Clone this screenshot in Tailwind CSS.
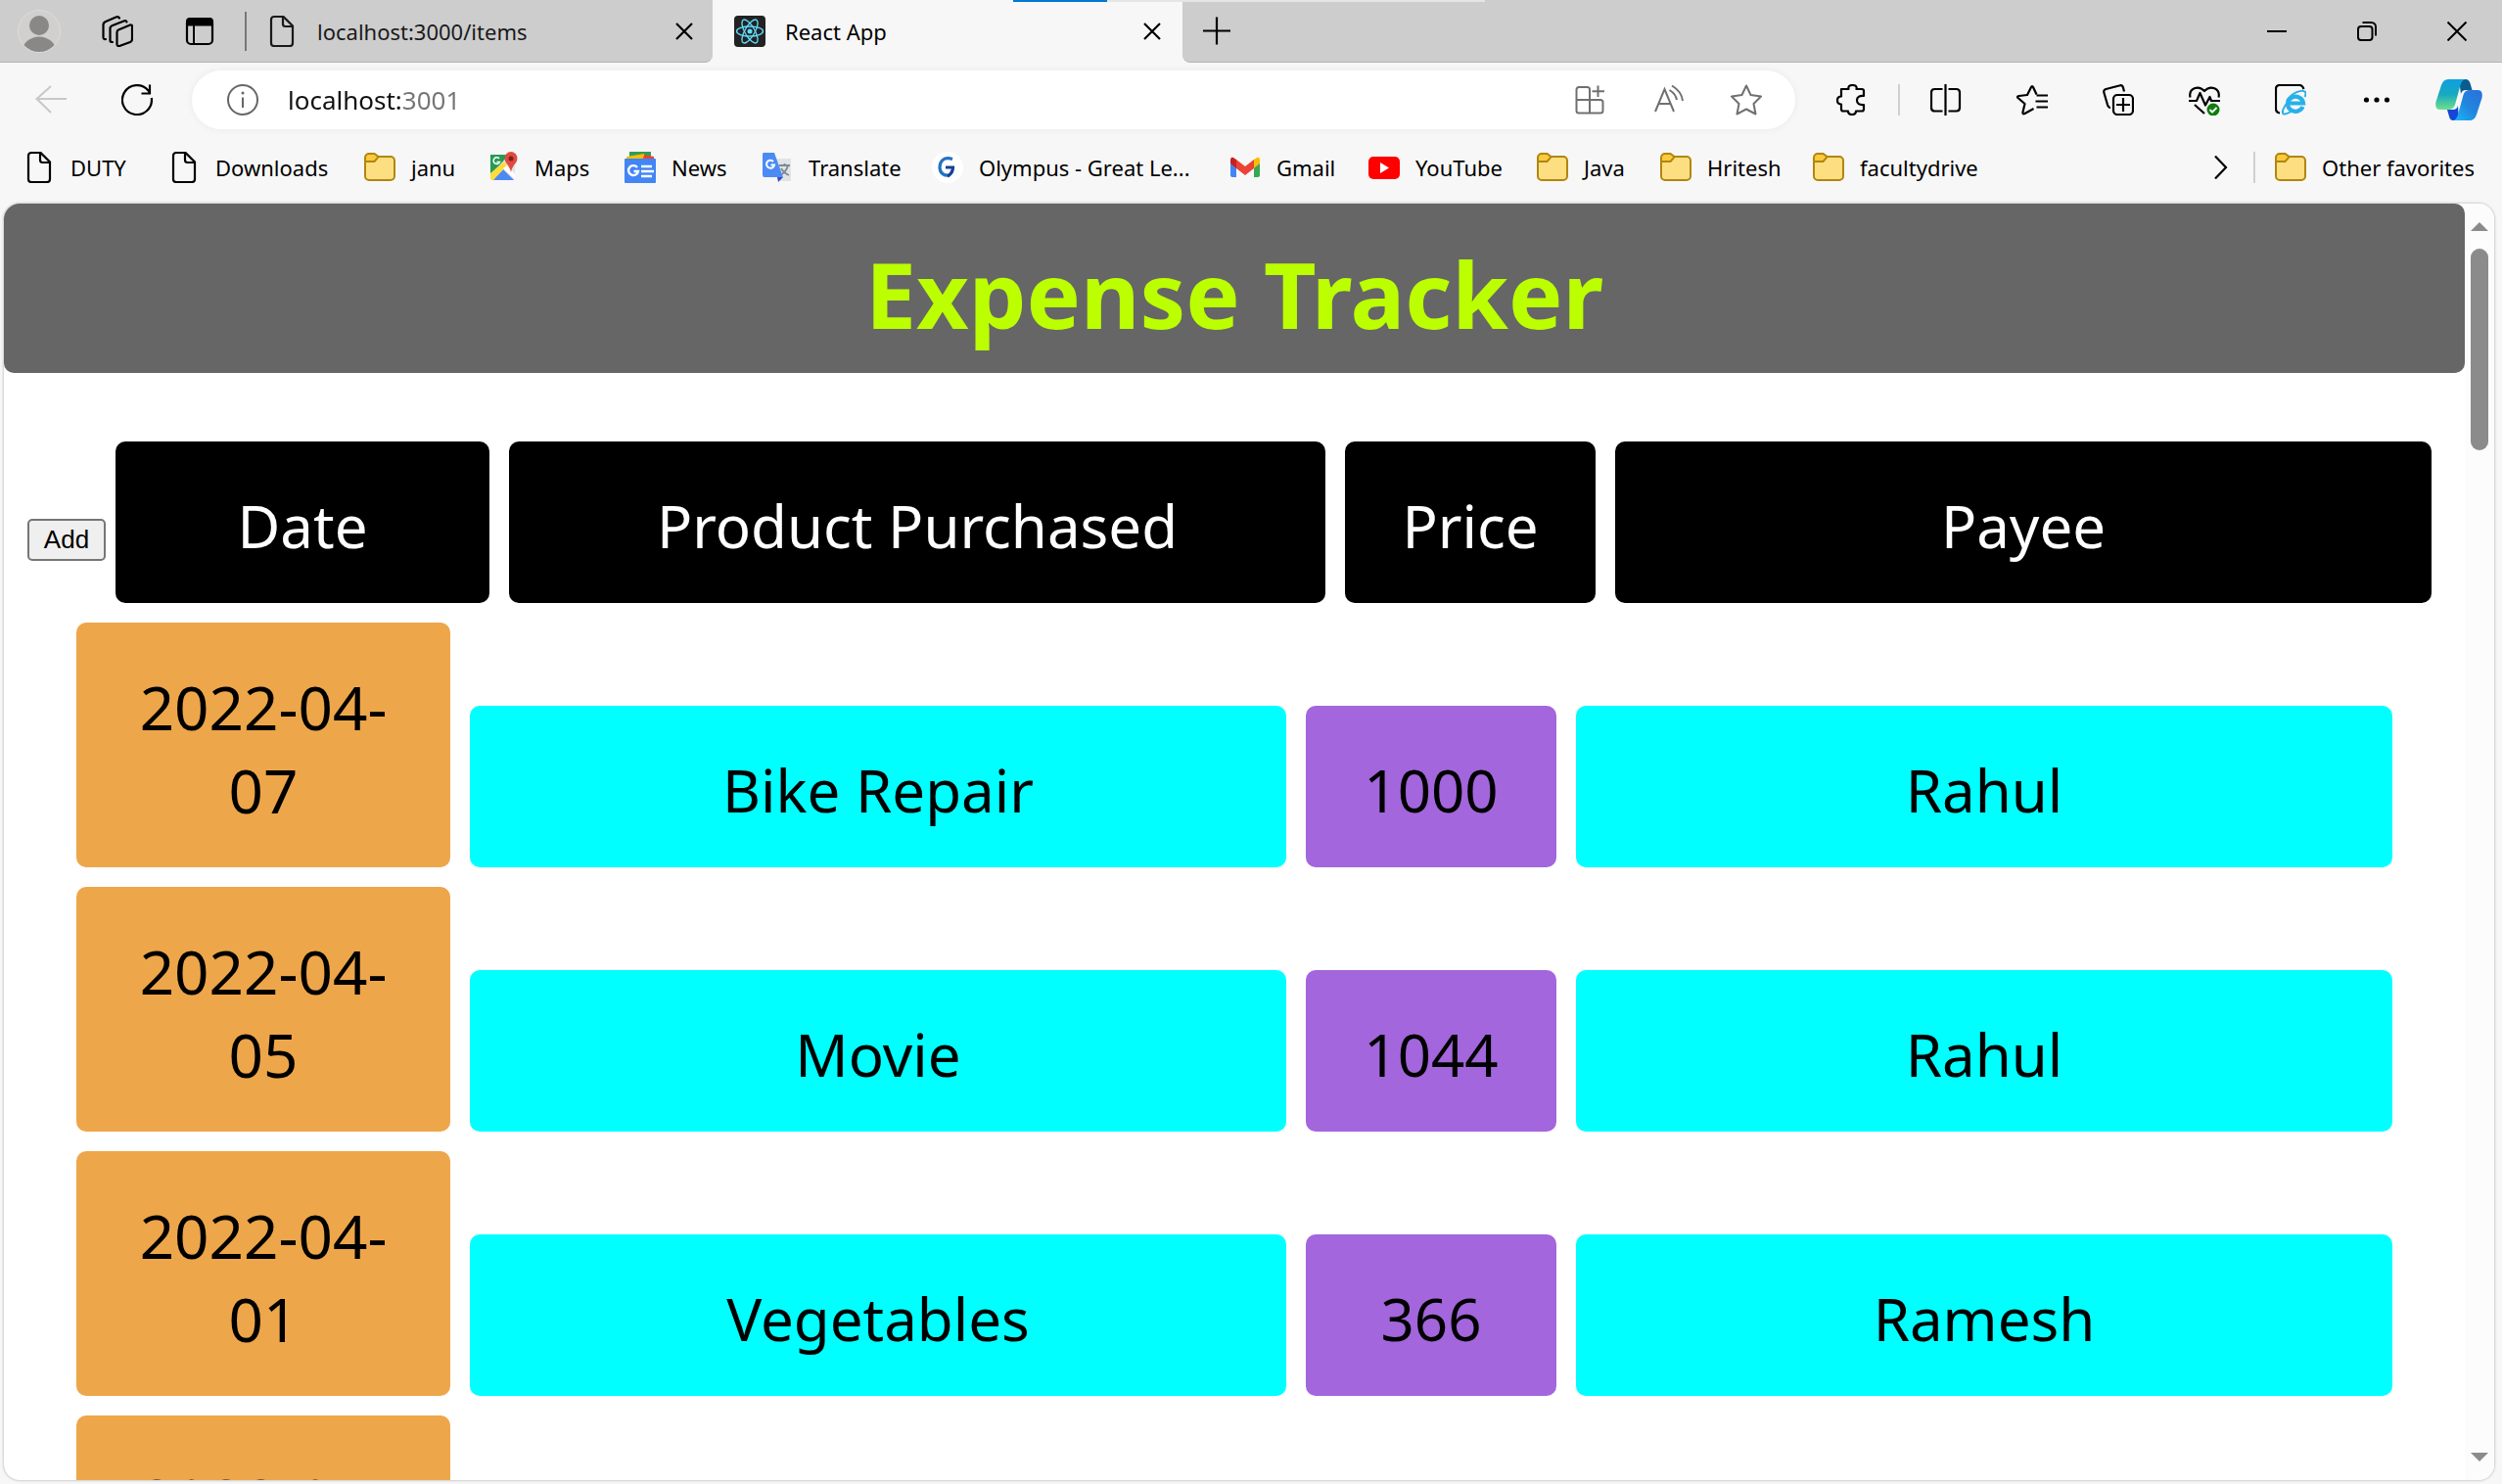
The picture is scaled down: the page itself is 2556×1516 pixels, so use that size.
<!DOCTYPE html>
<html lang="en">
<head>
<meta charset="utf-8">
<title>React App</title>
<script src="https://cdn.jsdelivr.net/npm/@tailwindcss/browser@4"></script>
</head>
<body class="flex h-screen flex-col overflow-hidden bg-[#f7f7f7] font-['Noto_Sans',sans-serif] text-[22px] leading-[30px] text-black">

<svg class="hidden" aria-hidden="true">
  <symbol id="file" viewBox="0 0 32 32"><path d="M7.500 1H17.500L27 10.500V28A3 3 0 0 1 24 31H8A3 3 0 0 1 5 28V4A3 3 0 0 1 8 1M17 1V8.500A2.500 2.500 0 0 0 19.500 11H27" fill="none" stroke="currentColor" stroke-width="2.200"/></symbol>
  <symbol id="folder" viewBox="0 0 32 32"><path d="M1 6A4 4 0 0 1 5 2H10.500L14.500 5H27A4 4 0 0 1 31 9V25A4 4 0 0 1 27 29H5A4 4 0 0 1 1 25Z" fill="#fddf82"/><path d="M1 10V6A4 4 0 0 1 5 2H10.500L14.500 5.500 10.500 10Z" fill="#fcca3d"/><path d="M1 10H10.500L14.500 5.300M1 6A4 4 0 0 1 5 2H10.500L14.500 5H27A4 4 0 0 1 31 9V25A4 4 0 0 1 27 29H5A4 4 0 0 1 1 25Z" fill="none" stroke="#b1860f" stroke-width="2"/></symbol>
  <symbol id="x" viewBox="0 0 20 20"><path d="M2 2 18 18M18 2 2 18" fill="none" stroke="currentColor" stroke-width="2.200"/></symbol>
</svg>

<!-- Tab strip -->
<header class="relative flex h-16 shrink-0">
  <div class="flex w-[728px] items-center rounded-br-lg border-b border-[#b4b4b4] bg-[#cdcdcd] pl-[18px]">
    <button aria-label="Profile" class="size-11">
      <svg viewBox="0 0 44 44"><defs><clipPath id="av"><circle cx="22" cy="22" r="21"/></clipPath></defs><circle cx="22" cy="22" r="21.500" fill="#d2d0ce" stroke="#dddcda"/><g clip-path="url(#av)" fill="#8a8886"><circle cx="22" cy="16" r="10"/><ellipse cx="22" cy="43" rx="17.500" ry="15.500"/></g></svg>
    </button>
    <button aria-label="Workspaces" class="ml-[42px] size-8">
      <svg viewBox="0 0 32 32" fill="none" stroke="currentColor" stroke-width="2.200" stroke-linejoin="round" stroke-linecap="round"><path d="M17 14.500 29 9.500Q31 9 31 11V24Q31 26 29 27L18 31Q15.500 31.500 15.500 29V17Q15.500 15 17 14.500Z"/><path d="M25.500 6.500Q25 4.500 22.500 5.500L11 10Q8.500 11 8.500 13V25.500Q8.500 27 11 27"/><path d="M18 2.500Q17 .500 14.500 1.500L4 6Q1.500 7 1.500 9.500V22Q1.500 24.500 4 24"/></svg>
    </button>
    <button aria-label="Tab actions" class="ml-[52px] size-8">
      <svg viewBox="0 0 32 32"><rect x="3" y="3" width="26" height="26" rx="4" fill="none" stroke="#000" stroke-width="2.200"/><path d="M2 10.500V6a4 4 0 0 1 4-4H26a4 4 0 0 1 4 4V10.500Z"/><path d="M10 10V29" stroke="#000" stroke-width="2"/></svg>
    </button>
    <div class="ml-[30px] h-10 w-0.5 bg-[#777]"></div>
    <a href="#" class="ml-[20px] flex flex-1 items-center text-[#1a1a1a]">
      <svg class="size-8"><use href="#file"/></svg><span class="ml-5">localhost:3000/items</span>
    </a>
    <button aria-label="Close tab" class="mr-[19px] size-5"><svg class="size-5"><use href="#x"/></svg></button>
  </div>
  <div class="flex w-[480px] items-center pl-[22px]">
    <svg class="size-8" viewBox="0 0 32 32"><rect width="32" height="32" rx="4" fill="#222"/><g fill="none" stroke="#61dafb" stroke-width="1.400"><ellipse cx="16" cy="16" rx="13.500" ry="5"/><ellipse cx="16" cy="16" rx="13.500" ry="5" transform="rotate(60 16 16)"/><ellipse cx="16" cy="16" rx="13.500" ry="5" transform="rotate(120 16 16)"/></g><circle cx="16" cy="16" r="2.500" fill="#61dafb"/></svg>
    <a href="#" class="ml-[20px] flex-1">React App</a>
    <button aria-label="Close tab" class="mr-[21px] size-5"><svg class="size-5"><use href="#x"/></svg></button>
  </div>
  <div class="flex flex-1 items-center rounded-bl-lg border-b border-[#b4b4b4] bg-[#cdcdcd] pl-[19px]">
    <button aria-label="New tab" class="size-8"><svg viewBox="0 0 32 32"><path d="M16 1.500V29.500M2 15.500H30" stroke="#000" stroke-width="2.200"/></svg></button>
    <div class="ml-auto flex items-center gap-[72px] pr-9">
      <button aria-label="Minimize" class="size-5"><svg viewBox="0 0 20 20"><path d="M0 10H20" stroke="#000" stroke-width="2"/></svg></button>
      <button aria-label="Restore" class="size-5"><svg viewBox="0 0 20 20" fill="none" stroke="#000" stroke-width="2"><rect x="1" y="5" width="14.500" height="14" rx="3"/><path d="M5.500 1H14.500A4.500 4.500 0 0 1 19 5.500V14.500"/></svg></button>
      <button aria-label="Close window" class="size-5"><svg viewBox="0 0 20 20"><path d="M.500.500 19.500 19.500M19.500.500.500 19.500" stroke="#000" stroke-width="2"/></svg></button>
    </div>
  </div>
  <div class="absolute top-0 left-[1035px] flex h-0.5 w-[482px] bg-[#e5e5e5]"><div class="w-24 bg-[#0078d4]"></div></div>
</header>

<!-- Address toolbar -->
<div class="flex h-[76px] shrink-0 items-center pr-5 pl-9">
  <button aria-label="Back" disabled class="size-8"><svg viewBox="0 0 32 32" fill="none" stroke="#c8c8c8" stroke-width="2"><path d="M16 2 1.500 15 16 29M1.500 15H32"/></svg></button>
  <button aria-label="Refresh" class="ml-14 size-8"><svg viewBox="0 0 32 32" fill="none" stroke="#000" stroke-width="2.200"><path d="M30.800 14A15 15 0 1 1 27.500 6.500L29 9M29 .500V9.500H20.500"/></svg></button>
  <div class="ml-10 flex h-[60px] min-w-0 flex-1 items-center rounded-full bg-white pr-[34px] pl-9 shadow-[0_0_8px_rgba(0,0,0,0.06)]">
    <svg class="size-8 shrink-0" viewBox="0 0 32 32" fill="none" stroke="#666" stroke-width="2"><circle cx="16" cy="16" r="15"/><path d="M16 13.500V24"/><circle cx="16" cy="9" r="1.500" fill="#666" stroke="none"/></svg>
    <input aria-label="Address" value="localhost:3001" class="ml-[30px] h-10 min-w-0 flex-1 bg-[linear-gradient(90deg,#111111_115px,#757575_115px)] bg-clip-text text-[26px] leading-9 text-transparent outline-none">
    <div class="flex gap-12 text-[#707070]">
      <button aria-label="Install app" class="size-8"><svg viewBox="0 0 32 32" fill="none" stroke="currentColor" stroke-width="2"><path d="M16 16V5A2.500 2.500 0 0 0 13.500 3H5A2.500 2.500 0 0 0 2.500 5.500V27A2.500 2.500 0 0 0 5 29.500H27A2.500 2.500 0 0 0 29.500 27V18.500A2.500 2.500 0 0 0 27 16H2.500M16 16V29.500M24.500 1.500V13M18.500 7.200H31"/></svg></button>
      <button aria-label="Read aloud" class="size-8"><svg viewBox="0 0 32 32" fill="none" stroke="currentColor" stroke-width="2"><path d="M3 28 12.500 5 22 28M6 20H19M17.500 6Q24 10 25 16M20 1.500Q30 7.500 31 17"/></svg></button>
      <button aria-label="Favorite this page" class="size-8"><svg viewBox="0 0 32 32" fill="none" stroke="currentColor" stroke-width="2" stroke-linejoin="round"><path d="M16 1.500 20.500 11 31 12.500 23.500 20 25.500 30.500 16 25.500 6.500 30.500 8.500 20 1 12.500 11.500 11Z"/></svg></button>
    </div>
  </div>
  <button aria-label="Extensions" class="ml-[42px] size-8"><svg viewBox="0 0 32 32" fill="none" stroke="#000" stroke-width="2.200" stroke-linejoin="round"><path d="M5 5H12.500Q11.500 1 16.500 1T20.500 5H26Q28 5 28 7V12Q21 11.500 21 16.500T28 21V25.500Q28 27.500 26 27.500H20Q20 31 16 31T12 27.500H7Q5 27.500 5 25.500V20.500Q1 20.500 1 16.500T5 12.500Z"/></svg></button>
  <div class="mx-[31px] h-8 w-0.5 bg-[#d0d0d0]"></div>
  <div class="flex items-center gap-14">
    <button aria-label="Split screen" class="size-8"><svg viewBox="0 0 32 32" fill="none" stroke="#000" stroke-width="2.200"><path d="M12.500 5H4.500Q1 5 1 8.500V24Q1 27.500 4.500 27.500H12.500M18.500 5H26.500Q30 5 30 8.500V24Q30 27.500 26.500 27.500H18.500M15.500 0V32"/></svg></button>
    <button aria-label="Favorites" class="size-8"><svg viewBox="0 0 32 32" fill="none" stroke="#000" stroke-width="2.200" stroke-linejoin="round"><path d="M17.500 25 8.500 30Q6 31 6.500 28.500L8.500 20 1.500 14Q0 12.500 2.500 12L11 11 15 3Q16 1 17 3L20.500 10.500M20.500 11.500H32M19.500 17.500H32M20.500 23.500H32"/></svg></button>
    <button aria-label="Collections" class="size-8"><svg viewBox="0 0 32 32" fill="none" stroke="#000" stroke-width="2.200"><rect x="11" y="11" width="20" height="20" rx="4"/><path d="M21 14V28M14 21H28M8 24Q6 24 5 21L1.500 9Q.500 6 3.500 5L17 1.500Q20 .500 21 3.500L22 7.500"/></svg></button>
    <button aria-label="Browser essentials" class="size-8"><svg viewBox="0 0 32 32" fill="none" stroke="#000" stroke-width="2.200" stroke-linejoin="round"><path d="M1.500 13.500C-.500 4 10 .500 16 7 22 .500 32.500 4 30.500 13.500M0 17H8L11.500 9 17 21.500 21.500 13 23 17H32M6 21 16 30"/><circle cx="25" cy="26" r="6.500" fill="#107c10" stroke="none"/><path d="M21.500 26 24 28.500 28.500 24" stroke="#fff" stroke-width="1.800"/></svg></button>
    <button aria-label="Internet Explorer mode" class="size-8"><svg viewBox="0 0 32 32" fill="none"><path d="M5 29.500Q1 29 1 25V5Q1 1 5 1H25Q28 1 29.500 5" stroke="#000" stroke-width="2.200"/><path d="M28.500 23A8 7.500 0 1 1 29 19.500H14" stroke="#28b1e9" stroke-width="4.200"/><path d="M12 17C17 9 28 4.500 31 8 32 9.500 31 12 30.500 13M12.500 19C7 26 6.500 31.500 10.500 30.500 13 30 15 29 17 27.500" stroke="#28b1e9" stroke-width="2"/></svg></button>
    <button aria-label="Settings and more" class="size-8"><svg viewBox="0 0 32 32"><circle cx="5.500" cy="16" r="2.600"/><circle cx="16" cy="16" r="2.600"/><circle cx="26.500" cy="16" r="2.600"/></svg></button>
  </div>
  <button aria-label="Copilot" class="ml-11 size-12"><svg viewBox="0 0 48 48"><defs>
    <linearGradient id="cpa" x1="0" y1="0" x2="0" y2="1"><stop offset="0" stop-color="#0f9fe0"/><stop offset=".5" stop-color="#18a9c0"/><stop offset="1" stop-color="#6ee08a"/></linearGradient>
    <linearGradient id="cpb" x1="1" y1="0" x2="0" y2="1"><stop offset="0" stop-color="#2a6fe0"/><stop offset=".5" stop-color="#2185dc"/><stop offset="1" stop-color="#18b9fb"/></linearGradient></defs>
    <path d="M24 3H31Q34 3 35.500 7L37.500 14H31Q27 14 26 18Z" fill="#0b5c8e"/>
    <path d="M24 45H18Q15 45 14 41L12 34H18Q22 34 23 30Z" fill="#1546d6"/>
    <path d="M13 3H31Q27 3.500 25.500 9L20 29Q18.500 34 13 34H5Q-1 34 .500 26L6 9Q8 3 13 3Z" fill="url(#cpa)"/>
    <path d="M35 45H18Q21.500 44.500 23 39L28.500 19Q30 14 35 14H43Q49 14 47.500 22L42 39Q40 45 35 45Z" fill="url(#cpb)"/>
  </svg></button>
</div>

<!-- Favorites bar -->
<nav class="flex h-[62px] shrink-0 items-center pr-7 pl-6 whitespace-nowrap">
  <a href="#" class="flex w-[148px] items-center gap-4"><svg class="size-8"><use href="#file"/></svg>DUTY</a>
  <a href="#" class="flex w-[200px] items-center gap-4"><svg class="size-8"><use href="#file"/></svg>Downloads</a>
  <a href="#" class="flex w-[126px] items-center gap-4"><svg class="size-8"><use href="#folder"/></svg>janu</a>
  <a href="#" class="flex w-[140px] items-center gap-4"><svg class="size-8" viewBox="0 0 32 32"><rect x="3" y="3" width="25" height="26" rx="2" fill="#e4e4e4"/><path d="M3 3H22L3 24Z" fill="#259b57"/><path d="M5 29 16 18 27 29Z" fill="#4a8af4"/><path d="M3 27V22L17 10 20 14 6 29H4Z" fill="#fddc3f"/><path d="M16 17 28 28V23L20 14Z" fill="#fff"/><path d="M12 7A3.300 3.300 0 1 0 12.500 10.500H9.500" fill="none" stroke="#fff" stroke-width="1.500"/><path d="M24 0A6.500 6.500 0 0 1 30.500 6.500C30.500 12 25.500 13 24 21 22.500 13 17.500 12 17.500 6.500A6.500 6.500 0 0 1 24 0Z" fill="#e04a3f"/><circle cx="24" cy="7" r="2.500" fill="#7d1f1c"/></svg>Maps</a>
  <a href="#" class="flex w-[140px] items-center gap-4"><svg class="size-8" viewBox="0 0 32 32"><path d="M5 0H27V10H5Z" fill="#2f9e57"/><path d="M2 5 20 2 22 11H2Z" fill="#fbbc04"/><path d="M20 3 30 5V11H18Z" fill="#ea4335"/><rect y="7" width="32" height="25" rx="1" fill="#4285f4"/><path d="M13 16A5 5 0 1 0 14 20H9.500" fill="none" stroke="#fff" stroke-width="2.400"/><path d="M17 15H28M17 20H30M17 25H28" stroke="#fff" stroke-width="2.600"/></svg>News</a>
  <a href="#" class="flex w-[174px] items-center gap-4"><svg class="size-8" viewBox="0 0 32 32"><path d="M13 7H30V30H19Z" fill="#e2e3e5"/><path d="M18 14H29M23.500 12V14M27 14Q25 21 19 24M20 17Q23 22 28 24" fill="none" stroke="#7b8a93" stroke-width="1.800"/><path d="M16 26H22L17 31Z" fill="#3a49c0"/><path d="M2 1H13L22 26H3Q1 26 1 24V2Z" fill="#4c8bf5"/><path d="M12 10A4 4 0 1 0 13 13.500H9.500" fill="none" stroke="#fff" stroke-width="2"/></svg>Translate</a>
  <a href="#" class="flex w-[304px] items-center gap-4"><svg class="size-8" viewBox="0 0 32 32"><circle cx="16" cy="16" r="16" fill="#fff"/><path d="M21 7.500C12 4.500 8 10 8 16S13 25 18 24" fill="none" stroke="#2273c3" stroke-width="3.200"/><path d="M14 16H21.500Q21.500 22 16 25" fill="none" stroke="#173f99" stroke-width="3.200"/></svg>Olympus - Great Le...</a>
  <a href="#" class="flex w-[142px] items-center gap-4"><svg class="size-8" viewBox="0 0 32 32"><path d="M1 8V24Q1 26 3 26H7V12Z" fill="#4285f4"/><path d="M31 8V24Q31 26 29 26H25V12Z" fill="#34a853"/><path d="M25 8 28 6Q31 5 31 9V12L25 17Z" fill="#fbbc04"/><path d="M7 8 16 15 25 8V17L16 24 7 17Z" fill="#ea4335"/><path d="M7 17V8L4 6Q1 5 1 9V12Z" fill="#c5221f"/></svg>Gmail</a>
  <a href="#" class="flex w-[172px] items-center gap-4"><svg class="size-8" viewBox="0 0 32 32"><rect y="5" width="32" height="23" rx="5" fill="#f00"/><path d="M12 11V22L21 16.500Z" fill="#fff"/></svg>YouTube</a>
  <a href="#" class="flex w-[126px] items-center gap-4"><svg class="size-8"><use href="#folder"/></svg>Java</a>
  <a href="#" class="flex w-[156px] items-center gap-4"><svg class="size-8"><use href="#folder"/></svg>Hritesh</a>
  <a href="#" class="flex items-center gap-4"><svg class="size-8"><use href="#folder"/></svg>facultydrive</a>
  <button aria-label="More favorites" class="ml-auto h-6 w-4"><svg viewBox="0 0 16 24" fill="none" stroke="#000" stroke-width="2.200"><path d="M2 .500 13 12 2 23.500"/></svg></button>
  <div class="ml-[25px] h-8 w-0.5 bg-[#d0d0d0]"></div>
  <a href="#" class="ml-5 flex items-center gap-4"><svg class="size-8"><use href="#folder"/></svg>Other favorites</a>
</nav>

<!-- Page viewport -->
<div class="mt-1.5 mr-2 mb-1 ml-1 flex min-h-0 flex-1 overflow-hidden rounded-2xl bg-white shadow-[0_0_3px_rgba(0,0,0,0.35)]">
  <main class="min-w-0 flex-1 overflow-hidden">
    <h1 class="rounded-[10px] bg-[#666] pt-[26px] pb-[14px] text-center text-[93px] leading-[133px] font-bold text-[#bbff00]">Expense Tracker</h1>
    <table class="mt-[70px] block w-full text-center text-[60px] leading-[85px]">
      <thead class="block px-6">
        <tr class="grid grid-cols-[80px_402fr_854fr_276fr_854fr] items-baseline *:font-normal">
          <th><button class="block h-[43px] w-20 rounded-[5px] border-2 border-[#767676] bg-[#efefef] font-['Liberation_Sans',Arial,sans-serif] text-[26px] leading-[38px]">Add</button></th>
          <th class="mx-[10px] rounded-[10px] bg-black pt-11 pb-9 text-white">Date</th>
          <th class="mx-[10px] rounded-[10px] bg-black pt-11 pb-9 text-white">Product Purchased</th>
          <th class="mx-[10px] rounded-[10px] bg-black pt-11 pb-9 text-white">Price</th>
          <th class="mx-[10px] rounded-[10px] bg-black pt-11 pb-9 text-white">Payee</th>
        </tr>
      </thead>
      <tbody class="block px-16">
        <tr class="mt-5 grid grid-cols-[402fr_854fr_276fr_854fr] items-end">
          <td class="mx-[10px] rounded-[10px] bg-[#eea64a] px-10 pt-11 pb-9 text-[62px]">2022-04-07</td>
          <td class="mx-[10px] rounded-[10px] bg-[#00ffff] pt-11 pb-9">Bike Repair</td>
          <td class="mx-[10px] rounded-[10px] bg-[#a366dc] pt-11 pb-9">1000</td>
          <td class="mx-[10px] rounded-[10px] bg-[#00ffff] pt-11 pb-9">Rahul</td>
        </tr>
        <tr class="mt-5 grid grid-cols-[402fr_854fr_276fr_854fr] items-end">
          <td class="mx-[10px] rounded-[10px] bg-[#eea64a] px-10 pt-11 pb-9 text-[62px]">2022-04-05</td>
          <td class="mx-[10px] rounded-[10px] bg-[#00ffff] pt-11 pb-9">Movie</td>
          <td class="mx-[10px] rounded-[10px] bg-[#a366dc] pt-11 pb-9">1044</td>
          <td class="mx-[10px] rounded-[10px] bg-[#00ffff] pt-11 pb-9">Rahul</td>
        </tr>
        <tr class="mt-5 grid grid-cols-[402fr_854fr_276fr_854fr] items-end">
          <td class="mx-[10px] rounded-[10px] bg-[#eea64a] px-10 pt-11 pb-9 text-[62px]">2022-04-01</td>
          <td class="mx-[10px] rounded-[10px] bg-[#00ffff] pt-11 pb-9">Vegetables</td>
          <td class="mx-[10px] rounded-[10px] bg-[#a366dc] pt-11 pb-9">366</td>
          <td class="mx-[10px] rounded-[10px] bg-[#00ffff] pt-11 pb-9">Ramesh</td>
        </tr>
        <tr class="mt-5 grid grid-cols-[402fr_854fr_276fr_854fr] items-end">
          <td class="mx-[10px] rounded-[10px] bg-[#eea64a] px-10 pt-11 pb-9 text-[62px]">2022-04-01</td>
        </tr>
      </tbody>
    </table>
  </main>
  <div class="flex w-[30px] shrink-0 flex-col items-center bg-[#fcfcfc] py-[19px]">
    <svg class="h-[9px] w-[18px]" viewBox="0 0 18 9"><path d="M9 0 18 9H0Z" fill="#8b8b8b"/></svg>
    <div class="mt-[18px] h-[206px] w-[18px] rounded-full bg-[#8b8b8b]"></div>
    <svg class="mt-auto h-[9px] w-[18px]" viewBox="0 0 18 9"><path d="M9 9 18 0H0Z" fill="#8b8b8b"/></svg>
  </div>
</div>
</body>
</html>
